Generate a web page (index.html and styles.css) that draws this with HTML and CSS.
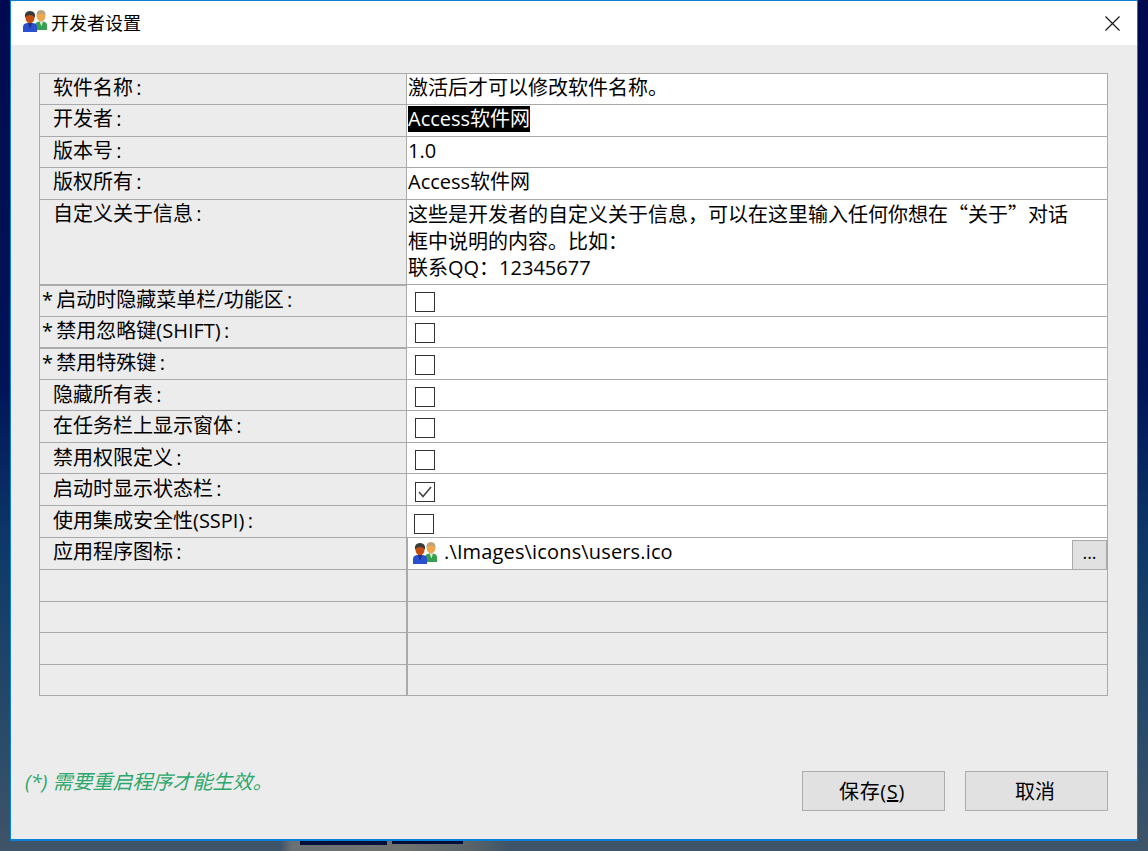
FILE: index.html
```html
<!DOCTYPE html>
<html lang="zh">
<head>
<meta charset="utf-8">
<title>开发者设置</title>
<link rel="stylesheet" href="styles.css">
</head>
<body>
<svg class="defs" width="0" height="0" aria-hidden="true">
  <symbol id="users" viewBox="0 0 24 22">
    <path d="M12 20v-5q0-3 4-3.500h4q4 .5 4 3.500v5z" fill="#37a04f"/>
    <path d="M16.500 11.500h3.500l-1.500 5z" fill="#dfeadc"/>
    <ellipse cx="18" cy="6.500" rx="4.300" ry="5" fill="#f0a850"/>
    <path d="M13.500 6q-.5-6 4.500-6t4.500 6q-1-2.500-4.500-2.500T13.500 6z" fill="#b9a27c"/>
    <path d="M0 22v-5q0-3.500 4-4h6q4 .5 4 4v5z" fill="#2a50cf"/>
    <path d="M5 13h4l-2 6z" fill="#1b2f80"/>
    <ellipse cx="7" cy="8" rx="4.500" ry="5.300" fill="#c24f10"/>
    <path d="M2 8Q1 1 7 1t5 7q-1.500-3-5-3T2 8z" fill="#3a3a3a"/>
  </symbol>
</svg>
<main class="window">
  <header class="titlebar">
    <svg class="icon"><use href="#users"/></svg>
    <span class="title">开发者设置</span>
    <svg class="close" viewBox="0 0 15 15"><path d="M.5.500l14 14M14.500.500l-14 14"/></svg>
  </header>
  <section class="content">
    <div class="sheet">
      <div class="row h31"><div class="label">软件名称&#8201;:</div><div class="value">激活后才可以修改软件名称。</div></div>
      <div class="row h32"><div class="label">开发者&#8201;:</div><div class="value"><span class="selected">Access软件网</span></div></div>
      <div class="row h31"><div class="label">版本号&#8201;:</div><div class="value">1.0</div></div>
      <div class="row h32"><div class="label">版权所有&#8201;:</div><div class="value">Access软件网</div></div>
      <div class="row tall"><div class="label">自定义关于信息&#8201;:</div><div class="value multi">这些是开发者的自定义关于信息&#xFF0C;可以在这里输入任何你想在<span class="cjk">&#x201C;关于&#x201D;</span>对话<br>框中说明的内容。比如&#xFF1A;<br>联系QQ&#xFF1A;12345677</div></div>
      <div class="row h32 thick"><div class="label star low">*&#8201;启动时隐藏菜单栏/功能区&#8201;:</div><div class="value"><span class="box"></span></div></div>
      <div class="row h31"><div class="label star">*&#8201;禁用忽略键(SHIFT)&#8201;:</div><div class="value"><span class="box up"></span></div></div>
      <div class="row h32 thick"><div class="label star low">*&#8201;禁用特殊键&#8201;:</div><div class="value"><span class="box"></span></div></div>
      <div class="row h31"><div class="label low">隐藏所有表&#8201;:</div><div class="value"><span class="box"></span></div></div>
      <div class="row h32"><div class="label low">在任务栏上显示窗体&#8201;:</div><div class="value"><span class="box"></span></div></div>
      <div class="row h31"><div class="label low">禁用权限定义&#8201;:</div><div class="value"><span class="box"></span></div></div>
      <div class="row h32"><div class="label low">启动时显示状态栏&#8201;:</div><div class="value"><span class="box down"><svg class="tick" viewBox="0 0 14 12"><path d="M1 6l4 4.500L13 1"/></svg></span></div></div>
      <div class="row h32"><div class="label low">使用集成安全性(SSPI)&#8201;:</div><div class="value"><span class="box down shift"></span></div></div>
      <div class="row h32 wide"><div class="label">应用程序图标&#8201;:</div><div class="value path"><svg class="icon"><use href="#users"/></svg><span class="path-text">.\Images\icons\users.ico</span><button class="browse" type="button">...</button></div></div>
      <div class="row h32 wide empty"><div class="label"></div><div class="value"></div></div>
      <div class="row h31 wide empty"><div class="label"></div><div class="value"></div></div>
      <div class="row h32 wide empty"><div class="label"></div><div class="value"></div></div>
      <div class="row h31 wide empty"><div class="label"></div><div class="value"></div></div>
    </div>
    <footer class="footer">
      <p class="hint">(*) 需要重启程序才能生效。</p>
      <div class="actions">
        <button class="btn save" type="button">保存(<u>S</u>)</button>
        <button class="btn" type="button">取消</button>
      </div>
    </footer>
  </section>
</main>
<div class="strip"></div>
</body>
</html>
```
FILE: styles.css
```css
* { box-sizing: border-box; }
html, body { margin: 0; height: 851px; overflow: hidden; }
body {
  padding: 0 10px;
  background: linear-gradient(180deg, #000a50 0, #001458 45%, #0f3a68 65%, #2c4c68 88%, #3f5468 100%);
  font-family: "Open Sans", "Noto Sans CJK SC", sans-serif;
  font-size: 20px;
  color: #000;
}
.defs { position: absolute; }
.cjk { font-family: "Noto Sans CJK SC", sans-serif; }
.window {
  width: 1128px;
  height: 841px;
  border: 1px solid #0a7fd6;
  border-bottom-width: 2px;
  display: flex;
  flex-direction: column;
  background: #ececec;
}
.titlebar {
  height: 44px;
  flex: none;
  background: #fff;
  display: flex;
  align-items: center;
  padding: 0 17px 0 12px;
  font-size: 18px;
}
.titlebar .icon { margin-bottom: 4px; }
.icon { width: 24px; height: 22px; flex: none; }
.title { margin-left: 4px; flex: 1; line-height: 24px; }
.close { width: 15px; height: 15px; fill: none; stroke: #111; stroke-width: 1.100; }
.content { flex: 1; display: flex; flex-direction: column; padding: 28px 29px 28px 28px; }
.sheet {
  width: 1069px;
  border: 1px solid #aaa;
  border-bottom: 0;
}
.row { display: flex; border-bottom: 1px solid #aaa; }
.h31 { height: 31px; }
.h32 { height: 32px; }
.tall { height: 85px; }
.thick .label { box-shadow: inset 0 1px 0 #aaa; }
.label {
  width: 367px;
  flex: none;
  padding-left: 13px;
  border-right: 1px solid #aaa;
  line-height: 28px;
  white-space: nowrap;
  overflow: hidden;
}
.star { padding-left: 2px; }
.low { padding-top: 1px; }
.value {
  flex: 1;
  background: #fff;
  padding-left: 1px;
  line-height: 28px;
  display: flex;
  align-items: flex-start;
  white-space: nowrap;
}
.multi { display: block; line-height: 26.500px; padding-top: 1px; }
.selected { background: #000; color: #fff; line-height: 26px; margin-top: 1px; }
.box {
  width: 20px;
  height: 20px;
  margin: 7px 0 0 7px;
  border: 1px solid #333;
  display: flex;
  align-items: center;
  justify-content: center;
}
.up { margin-top: 6px; }
.down { margin-top: 8px; }
.shift { margin-left: 6px; }
.tick { width: 14px; height: 12px; fill: none; stroke: #444; stroke-width: 1.600; }
.wide .label { border-right-width: 2px; width: 368px; }
.wide.empty .value { background: #ececec; }
.path { align-items: center; padding-left: 5px; }
.path-text { margin-left: 7px; flex: 1; line-height: 28px; margin-bottom: 4px; letter-spacing: .15px; }
.path .icon { margin-bottom: 2px; }
.browse {
  width: 35px;
  height: 29px;
  align-self: flex-end;
  border: 1px solid #aaa;
  border-width: 1px 1px 0 1px;
  background: #e1e1e1;
  font: inherit;
  font-size: 18px;
  line-height: 20px;
  padding: 0 0 6px;
  color: #000;
}
.footer {
  margin-top: auto;
  display: flex;
  justify-content: space-between;
  align-items: flex-start;
}
.hint {
  margin: -3px 0 0 -14px;
  font-style: italic;
  color: #2ca86c;
  line-height: 28px;
}
.actions { display: flex; gap: 20px; }
.btn {
  width: 143px;
  height: 40px;
  border: 1px solid #adadad;
  background: #e1e1e1;
  font: inherit;
  padding: 0 3px 2px 0;
  color: #000;
}
.save { letter-spacing: .6px; }
.strip {
  height: 10px;
  margin: 0 -10px;
  background:
    linear-gradient(#05103a, #05103a) 300px 0 / 87px 4px no-repeat,
    linear-gradient(#05103a, #05103a) 392px 0 / 71px 3px no-repeat,
    linear-gradient(90deg, transparent 280px, #6b7074 292px, #70746f 400px, #5a6468 470px, transparent 510px);
}
```
